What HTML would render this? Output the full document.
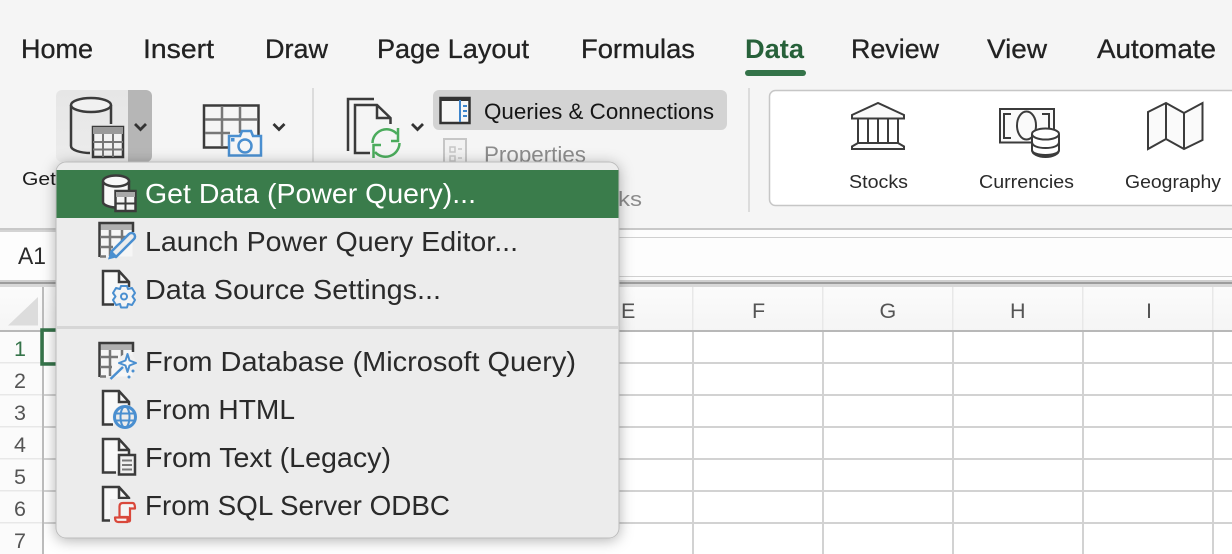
<!DOCTYPE html>
<html><head><meta charset="utf-8"><style>
html,body{margin:0;padding:0;background:#f5f5f5;width:1232px;height:554px;overflow:hidden}
svg{display:block}
text{font-family:"Liberation Sans",sans-serif}
.tab{font-size:26.5px;fill:#222;stroke:#222;stroke-width:.3px}
.m{font-size:28px;fill:#2a2a2a}
.h{font-size:21.5px;fill:#555}
.r{font-size:21.5px;fill:#555;text-anchor:middle}
.k{fill:none;stroke:#3b3b3b;stroke-width:2.5}
.b{fill:none;stroke:#4a8fd0;stroke-width:2.5}
.g{fill:none;stroke:#777;stroke-width:2.5}
</style></head><body>
<svg width="1232" height="554" viewBox="0 0 1232 554" xmlns="http://www.w3.org/2000/svg">
<defs>
<linearGradient id="hd" x1="0" y1="0" x2="0" y2="1"><stop offset="0" stop-color="#fbfbfb"/><stop offset="1" stop-color="#f5f5f5"/></linearGradient>
<linearGradient id="bt" x1="0" y1="0" x2="0" y2="1"><stop offset="0" stop-color="#e6e6e6"/><stop offset="1" stop-color="#ececec"/></linearGradient>
<filter id="sh" x="-10%" y="-10%" width="120%" height="125%"><feDropShadow dx="0" dy="2" stdDeviation="7" flood-color="#000" flood-opacity=".3"/></filter>
</defs>

<!-- ribbon -->
<rect width="1232" height="228" fill="#f5f5f5"/>
<rect y="228" width="1232" height="2" fill="#c8c8c8"/>
<rect y="230" width="56" height="2" fill="#d4d4d4"/>
<g class="tab">
<text x="21" y="58" textLength="72" lengthAdjust="spacingAndGlyphs">Home</text>
<text x="143" y="58" textLength="71" lengthAdjust="spacingAndGlyphs">Insert</text>
<text x="265" y="58" textLength="63" lengthAdjust="spacingAndGlyphs">Draw</text>
<text x="377" y="58" textLength="152" lengthAdjust="spacingAndGlyphs">Page Layout</text>
<text x="581" y="58" textLength="114" lengthAdjust="spacingAndGlyphs">Formulas</text>
<text x="851" y="58" textLength="88" lengthAdjust="spacingAndGlyphs">Review</text>
<text x="987" y="58" textLength="60" lengthAdjust="spacingAndGlyphs">View</text>
<text x="1097" y="58" textLength="119" lengthAdjust="spacingAndGlyphs">Automate</text>
</g>
<text x="745" y="58" font-size="26.5" font-weight="700" fill="#27613a" textLength="59" lengthAdjust="spacingAndGlyphs">Data</text>
<rect x="745" y="70" width="61" height="6" rx="3" fill="#347349"/>

<!-- separators -->
<rect x="312" y="88" width="2" height="74" fill="#dcdcdc"/>
<rect x="748" y="88" width="2" height="124" fill="#dcdcdc"/>

<!-- Get Data button -->
<path d="M62 90H128V162H62a6 6 0 0 1-6-6V96a6 6 0 0 1 6-6z" fill="url(#bt)"/>
<path d="M128 90H146a6 6 0 0 1 6 6V156a6 6 0 0 1-6 6H128z" fill="#b6b6b6"/>
<path class="k" d="M71 105V146C71 150 80 153 91 153M111 105V126"/>
<ellipse cx="91" cy="105" rx="20" ry="7" fill="#f1f1f1" stroke="#3b3b3b" stroke-width="2.500"/>
<rect x="90" y="124" width="35" height="35" fill="#e8e8e8"/>
<rect x="93" y="127" width="30" height="30" fill="#f2f2f2" stroke="#3b3b3b" stroke-width="2.500"/>
<rect x="93" y="127" width="30" height="7" fill="#9a9a9a"/>
<path d="M103 134V157M113 134V157M93 142H123M93 149.500H123" stroke="#777" stroke-width="2"/>
<path d="M135 124l5.500 5.500 5.500-5.500" fill="none" stroke="#333" stroke-width="2.800"/>
<text x="22" y="185" font-size="18.500" fill="#1c1c1c" textLength="34" lengthAdjust="spacingAndGlyphs">Get</text>

<!-- Camera table -->
<rect class="k" x="204" y="105.500" width="54.500" height="42"/>
<path class="g" d="M222 106V146M240 106V133M205 119.500H257M205 133H230"/>
<path d="M229 136H240L242 131H251L253 136H261V155.500H229z" fill="#f6f6f6" stroke="#4a8fd0" stroke-width="2.500"/>
<circle class="b" cx="245" cy="146" r="6.500"/>
<rect x="231" y="138" width="3.500" height="3.500" fill="#4a8fd0"/>
<path d="M273.500 124l5.500 5.500 5.500-5.500" fill="none" stroke="#333" stroke-width="2.800"/>

<!-- Refresh doc -->
<path class="k" d="M374 99H348V151"/>
<path class="k" d="M370 153H355V105H377L390.500 118V124M377 105V118H390.500"/>
<circle cx="386" cy="143" r="17" fill="#f5f5f5"/>
<path fill="none" stroke="#4bab5c" stroke-width="2.500" d="M372.500 143A14 14 0 0 1 397 134M399.500 143A14 14 0 0 1 375 152"/>
<path fill="none" stroke="#4bab5c" stroke-width="2.500" d="M398 128V141H391M373.500 158V145H381"/>
<path d="M412 124l5.500 5.500 5.500-5.500" fill="none" stroke="#333" stroke-width="2.800"/>

<!-- Queries -->
<rect x="433" y="90" width="294" height="40" rx="6" fill="#d3d3d3"/>
<rect x="440.500" y="98" width="29" height="25" fill="#f7f7f7" stroke="#333" stroke-width="2.500"/>
<rect x="440" y="97" width="30" height="4" fill="#333"/>
<rect x="459" y="100" width="2" height="22" fill="#3d85cc"/>
<path d="M463 106h4M463 111h4M463 116h4" stroke="#3d85cc" stroke-width="2"/>
<text x="484" y="119" font-size="22" fill="#151515" textLength="230" lengthAdjust="spacingAndGlyphs">Queries &amp; Connections</text>

<!-- Properties -->
<path d="M444 170V139H466V170" fill="#f2f2f2" stroke="#c6c6c6" stroke-width="2"/>
<path d="M450 147h5v5h-5zM450 156h5v5h-5zM458 149h4M458 158h4" fill="none" stroke="#c6c6c6" stroke-width="1.500"/>
<text x="484" y="162" font-size="22" fill="#8c8c8c" textLength="102" lengthAdjust="spacingAndGlyphs">Properties</text>
<text x="618" y="206" font-size="20" fill="#8c8c8c" textLength="24" lengthAdjust="spacingAndGlyphs">ks</text>

<!-- Data types -->
<rect x="769.500" y="90.500" width="480" height="115" rx="6" fill="#fff" stroke="#c6c6c6" stroke-width="1.500"/>
<g fill="#fafafa" stroke="#3b3b3b" stroke-width="2">
<path d="M852 118.500V115L878 103L904 115V118.500z"/>
<path d="M858 119V143M868 119V143M878 119V143M888 119V143M898 119V143M858 143H898"/>
<path d="M852 149V146.500L858 143H898L904 146.500V149z"/>
</g>
<rect x="1000" y="109" width="54" height="33.500" fill="#fafafa" stroke="#3b3b3b" stroke-width="2"/>
<path d="M1011 114H1004V138H1011M1042 114H1049V130" fill="none" stroke="#3b3b3b" stroke-width="2"/>
<ellipse cx="1026.500" cy="125.500" rx="9.500" ry="14" fill="none" stroke="#3b3b3b" stroke-width="2"/>
<g fill="#fff" stroke="#3b3b3b" stroke-width="2">
<path d="M1032 134V150C1032 154 1038 157 1045.500 157S1059 154 1059 150V134"/>
<ellipse cx="1045.500" cy="134" rx="13.500" ry="5.500"/>
<path d="M1032 142C1032 146 1038 148 1045.500 148S1059 146 1059 142M1032 150C1032 153 1038 155 1045.500 155S1059 153 1059 150" fill="none"/>
</g>
<path d="M1148 112L1166 103L1184 113L1202.500 103V140L1184 149L1166 139L1148 149z" fill="#fafafa" stroke="#3b3b3b" stroke-width="2"/>
<path d="M1166 103V139M1184 113V149" stroke="#3b3b3b" stroke-width="2"/>
<g font-size="18" fill="#2a2a2a">
<text x="849" y="188" textLength="59" lengthAdjust="spacingAndGlyphs">Stocks</text>
<text x="979" y="188" textLength="95" lengthAdjust="spacingAndGlyphs">Currencies</text>
<text x="1125" y="188" textLength="96" lengthAdjust="spacingAndGlyphs">Geography</text>
</g>

<!-- formula bar -->
<rect y="230" width="1232" height="50" fill="#fdfdfd"/>
<rect y="230" width="56" height="2" fill="#d4d4d4"/>
<rect x="56" y="237" width="1176" height="1" fill="#d0d0d0"/>
<rect x="56" y="276" width="1176" height="1" fill="#d0d0d0"/>
<rect y="280" width="1232" height="2" fill="#cfcfcf"/>
<rect y="282" width="1232" height="2" fill="#9d9d9d"/>
<rect y="284" width="1232" height="3" fill="#d8d8d8"/>
<text x="18" y="264" font-size="24" fill="#2a2a2a" textLength="28" lengthAdjust="spacingAndGlyphs">A1</text>

<!-- grid -->
<rect y="287" width="1232" height="44" fill="url(#hd)"/>
<rect y="331" width="1232" height="223" fill="#fff"/>
<rect x="0" y="331" width="43" height="223" fill="#fbfbfb"/>
<g fill="#d2d2d2">
<rect x="44" y="362" width="1188" height="2"/><rect x="44" y="394" width="1188" height="2"/>
<rect x="44" y="426" width="1188" height="2"/><rect x="44" y="458" width="1188" height="2"/>
<rect x="44" y="490" width="1188" height="2"/><rect x="44" y="522" width="1188" height="2"/>
<rect x="692" y="331" width="2" height="223"/><rect x="822" y="331" width="2" height="223"/>
<rect x="952" y="331" width="2" height="223"/><rect x="1082" y="331" width="2" height="223"/>
<rect x="1212" y="331" width="2" height="223"/>
</g>
<g fill="#e8e8e8">
<rect x="0" y="362" width="43" height="1.500"/><rect x="0" y="394" width="43" height="1.500"/>
<rect x="0" y="426" width="43" height="1.500"/><rect x="0" y="458" width="43" height="1.500"/>
<rect x="0" y="490" width="43" height="1.500"/><rect x="0" y="522" width="43" height="1.500"/>
<rect x="692" y="287" width="1.500" height="44"/><rect x="822" y="287" width="1.500" height="44"/>
<rect x="952" y="287" width="1.500" height="44"/><rect x="1082" y="287" width="1.500" height="44"/>
<rect x="1212" y="287" width="1.500" height="44"/>
</g>
<rect x="0" y="330" width="1232" height="2" fill="#b8b8b8"/>
<rect x="42" y="287" width="2" height="267" fill="#bcbcbc"/>
<path d="M8 325.500L38 297V325.500z" fill="#dcdcdc"/>
<path d="M56 330H42V364H56" fill="none" stroke="#347349" stroke-width="3.500"/>

<text class="h" x="621" y="318">E</text>
<text class="h" x="752" y="318">F</text>
<text class="h" x="879.500" y="318">G</text>
<text class="h" x="1010" y="318">H</text>
<text class="h" x="1146" y="318">I</text>
<text class="r" x="20" y="356" style="fill:#347349">1</text>
<text class="r" x="20" y="388">2</text>
<text class="r" x="20" y="420">3</text>
<text class="r" x="20" y="452">4</text>
<text class="r" x="20" y="484">5</text>
<text class="r" x="20" y="516">6</text>
<text class="r" x="20" y="548">7</text>

<!-- menu -->
<rect x="56" y="162" width="563" height="376" rx="10" fill="#ececec" stroke="#bdbdbd" stroke-width="1" filter="url(#sh)"/>
<rect x="56.500" y="170" width="562" height="48" fill="#3a7c4b"/>
<rect x="57" y="326" width="561" height="3" fill="#d6d6d6"/>
<g class="m">
<text x="145" y="203" style="fill:#fff" textLength="331" lengthAdjust="spacingAndGlyphs">Get Data (Power Query)...</text>
<text x="145" y="251" textLength="373" lengthAdjust="spacingAndGlyphs">Launch Power Query Editor...</text>
<text x="145" y="299" textLength="296" lengthAdjust="spacingAndGlyphs">Data Source Settings...</text>
<text x="145" y="371" textLength="431" lengthAdjust="spacingAndGlyphs">From Database (Microsoft Query)</text>
<text x="145" y="419" textLength="150" lengthAdjust="spacingAndGlyphs">From HTML</text>
<text x="145" y="467" textLength="246" lengthAdjust="spacingAndGlyphs">From Text (Legacy)</text>
<text x="145" y="515" textLength="305" lengthAdjust="spacingAndGlyphs">From SQL Server ODBC</text>
</g>

<!-- menu icon: get data -->
<path d="M103 181V202C103 205 109 207 116 207H130V181z" fill="#f8f8f8"/>
<path class="k" d="M103 181V202C103 205 109 207 115 207.500M129 181V190"/>
<ellipse cx="116" cy="181" rx="13" ry="5.500" fill="#f8f8f8" stroke="#3b3b3b" stroke-width="2.500"/>
<rect x="115.500" y="191" width="20" height="20" fill="#f4f4f4" stroke="#3b3b3b" stroke-width="2.500"/>
<rect x="116" y="192" width="19" height="5" fill="#a8a8a8"/>
<path d="M125.500 197V210M116 203.500H135" stroke="#3b3b3b" stroke-width="2"/>

<!-- launch -->
<rect x="99.500" y="223" width="33" height="33.500" fill="#f6f6f6"/>
<rect x="100" y="224" width="33" height="6" fill="#b0b0b0"/>
<path class="k" d="M99.500 257V223H133V232"/>
<path class="g" d="M110 230V256M122 230V245M100 237H130M100 247H113M100 256.500H106"/>
<path d="M111 252L129 234A3 3 0 0 1 134 239L116 257z" fill="#ececec" stroke="#4a8fd0" stroke-width="2.500" stroke-linejoin="round"/>
<path d="M108 259.500L111 250L118 257z" fill="#4a8fd0"/>

<!-- data source -->
<path d="M103 271V304H117V290H129V282L119 271z" fill="#f8f8f8"/>
<path class="k" d="M114 304.500H103V271H119L129 282V287M119 271V282H129"/>
<path fill="#f4f4f4" stroke="#4a8fd0" stroke-width="2" stroke-linejoin="round" d="M121 286H127L128 289L132 288L135 293L132.500 296.500L135 300L132 305L128 304L127 307.500H121L120 304L116 305L113 300L115.500 296.500L113 293L116 288L120 289z"/>
<circle cx="124" cy="296.500" r="3" fill="none" stroke="#4a8fd0" stroke-width="2"/>

<!-- database wizard -->
<rect x="99.500" y="343" width="33" height="33.500" fill="#f6f6f6"/>
<rect x="100" y="344" width="33" height="6" fill="#b0b0b0"/>
<path class="k" d="M99.500 377V343H133V352"/>
<path class="g" d="M110 350V376M122 350V358M100 357H118M100 367H112M100 376.500H106"/>
<circle cx="127" cy="363" r="9" fill="#f0f0f0"/>
<path d="M127.500 354L129.500 360.500L136 363L129.500 365.500L127.500 372L125.500 365.500L119 363L125.500 360.500z" fill="#f8f8f8" stroke="#4a8fd0" stroke-width="2" stroke-linejoin="round"/>
<path d="M110.500 379L123 367" stroke="#4a8fd0" stroke-width="2.500"/>
<circle cx="133" cy="371" r="1.500" fill="#4a8fd0"/><circle cx="129" cy="377" r="1.500" fill="#4a8fd0"/>

<!-- html -->
<path d="M103 391V424H117V410H129V402L119 391z" fill="#f8f8f8"/>
<path class="k" d="M113 424.500H103V391H119L129 402V406M119 391V402H129"/>
<circle cx="125" cy="417" r="12.500" fill="#ececec"/>
<circle cx="125" cy="417" r="10.500" fill="none" stroke="#4a8fd0" stroke-width="3"/>
<ellipse cx="125" cy="417" rx="4.500" ry="10.500" fill="none" stroke="#4a8fd0" stroke-width="2"/>
<path d="M115 413.500H135M115 420.500H135" stroke="#4a8fd0" stroke-width="2"/>

<!-- text -->
<path d="M103 439V472H119V455H129V450L119 439z" fill="#f8f8f8"/>
<path class="k" d="M116 472.500H103V439H119L129 450V454M119 439V450H129"/>
<rect x="119" y="455" width="16" height="19.500" fill="#f0f0f0" stroke="#3b3b3b" stroke-width="2.500"/>
<path d="M122 460.500H132M122 465H132M122 469.500H132" stroke="#777" stroke-width="2"/>

<!-- sql -->
<path d="M103 487V520H115V502H129V498L119 487z" fill="#f8f8f8"/>
<path class="k" d="M113 520.500H103V487H119L129 498V502M119 487V498H129"/>
<rect x="110" y="499" width="28" height="26" fill="#ececec"/>
<g fill="#f4f4f4" stroke="#d9483b" stroke-width="2.200" stroke-linejoin="round">
<path d="M129 503H123C120.500 503 119.500 504.500 119.500 506.500V517H128V520C128 521.500 129.500 522 130 520.500V507"/>
<path d="M129 503H132.500C134.500 503 135 505 135 508.500H130"/>
<path d="M115 517.500H127.500V522H118C116 522 115 520.500 115 517.500z"/>
</g>
</svg>
</body></html>
